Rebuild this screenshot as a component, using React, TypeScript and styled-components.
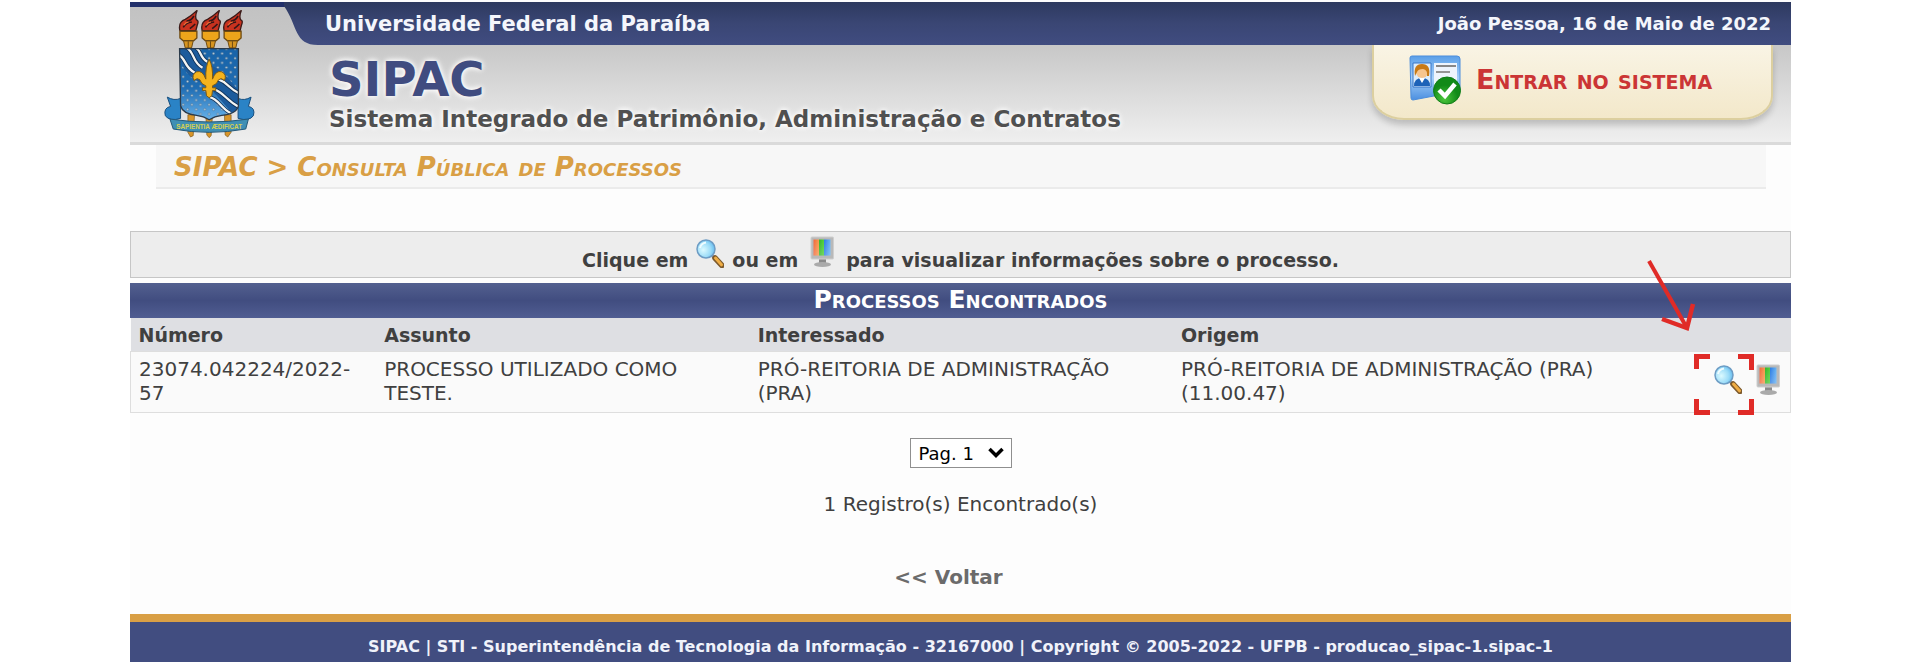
import React from "react";
import styled, { createGlobalStyle } from "styled-components";

const GlobalStyle = createGlobalStyle`
  * { box-sizing: border-box; }
  body {
    margin: 0;
    background: #fff;
    color: #404040;
    font-family: "DejaVu Sans", Verdana, sans-serif;
    font-size: 20px;
    line-height: 24px;
  }
`;

const Page = styled.div`
  margin: 0 129px 0 130px;
  padding-top: 2px;
  background: #fdfdfd;
`;

const Header = styled.header`
  display: flex;
  border-top: 5px solid #22306a;
  border-bottom: 3px solid #dadada;
  background: linear-gradient(#c2c2c2 0, #c8c8c8 40px, #efefef 100%);
`;

const CrestBox = styled.div`
  flex: none;
  width: 154px;
  padding: 3px 0 4px 34px;

  svg { display: block; }
`;

const HeaderBody = styled.div`
  flex: 1;
  min-width: 0;
`;

const TopBar = styled.div`
  display: flex;
  align-items: center;
  justify-content: space-between;
  height: 43px;
  margin-top: -5px;
  padding: 0 20px 0 41px;
  background: linear-gradient(#2d395f, #3a4674 50%, #404c80);
  clip-path: path("M0 0 H9000 V43 H34 C10 43 14 24 0 4 Z");
  color: #f4f6fc;
  font-weight: bold;
`;

const University = styled.span`
  font-size: 21px;
`;

const Today = styled.span`
  font-size: 18px;
`;

const HeaderMain = styled.div`
  display: flex;
  justify-content: space-between;
  align-items: flex-start;
  padding-right: 18px;
`;

const Brand = styled.div`
  padding: 7px 0 8px 45px;
  font-weight: bold;
  text-shadow: 0 0 5px #fff, 0 0 7px #fff;
`;

const BrandName = styled.h1`
  margin: 0;
  color: #404c80;
  font-size: 48px;
  line-height: 54px;
`;

const BrandText = styled.p`
  margin: 0;
  color: #505050;
  font-size: 23px;
  line-height: 26px;
`;

const Login = styled.a`
  display: flex;
  align-items: center;
  gap: 15px;
  width: 401px;
  height: 75px;
  padding: 0 0 4px 34px;
  border: 2px solid #dccf9f;
  border-top: 0;
  border-radius: 0 0 32px 32px / 0 0 24px 24px;
  background: linear-gradient(#f9f4e5, #f3e8ca);
  box-shadow: 0 5px 6px rgba(0, 0, 0, 0.18);
  color: #cb3535;
  font-size: 27px;
  font-variant: small-caps;
  font-weight: bold;
  text-decoration: none;
  white-space: nowrap;
`;

const Breadcrumb = styled.h2`
  margin: 0 25px 42px 26px;
  padding: 10px 18px 8px;
  border-bottom: 2px solid #ebebeb;
  background: #f7f7f7;
  color: #d99f45;
  font-size: 26px;
  font-style: italic;
  font-variant: small-caps;
  font-weight: bold;
  line-height: 24px;
`;

const Legend = styled.div`
  display: flex;
  align-items: flex-end;
  justify-content: center;
  gap: 8px;
  height: 47px;
  margin-bottom: 5px;
  padding-bottom: 5px;
  border: 1px solid #c6c6c6;
  background: #ededed;
  font-size: 19px;
  font-weight: bold;

  svg { margin-bottom: 4px; }
  svg + span + svg { margin: 0 4px 4px; }
`;

const Results = styled.table`
  width: 100%;
  table-layout: fixed;
  border-collapse: collapse;
`;

const Caption = styled.caption`
  height: 35px;
  background: linear-gradient(#53608f, #414d80 50%, #505d92);
  color: #fff;
  font-size: 25px;
  font-variant: small-caps;
  font-weight: bold;
  line-height: 34px;
`;

const Head = styled.th`
  padding: 5px 8px 4px;
  background: #dedfe3;
  font-size: 19px;
  text-align: left;
`;

const Row = styled.tr`
  border: 1px solid #dedede;
  background: #fafafa;
`;

const Cell = styled.td`
  padding: 5px 8px 7px;
  vertical-align: top;
`;

const ActionCell = styled.td<{ $pad: string }>`
  position: relative;
  padding: ${(p) => p.$pad};
  text-align: center;
  vertical-align: middle;
`;

const IconButton = styled.button`
  display: inline-flex;
  padding: 0;
  border: 0;
  background: none;
  cursor: pointer;
`;

const Highlight = styled.svg`
  position: absolute;
  top: -95px;
  left: -52px;
  pointer-events: none;
`;

const Col = styled.col<{ $width?: string }>`
  width: ${(p) => p.$width ?? "auto"};
`;

const Pager = styled.div`
  display: flex;
  flex-direction: column;
  align-items: center;
  padding: 25px 0 25px;
`;

const SelectWrap = styled.label`
  display: grid;
  align-items: center;
  margin-bottom: 24px;

  > * { grid-area: 1 / 1; }
  svg { justify-self: end; margin-right: 8px; pointer-events: none; }
`;

const PageSelect = styled.select`
  width: 102px;
  height: 30px;
  padding: 0 8px;
  border: 1px solid #8f8f8f;
  border-radius: 0;
  appearance: none;
  background: #fff;
  color: #000;
  font: 18px "DejaVu Sans", Verdana, sans-serif;
`;

const Total = styled.p`
  margin: 0 0 49px;
`;

const Back = styled.a`
  padding-right: 24px;
  color: #6b6b6b;
  font-weight: bold;
  text-decoration: none;
`;

const Footer = styled.footer`
  padding: 13px 0 4px;
  border-top: 8px solid #d99f45;
  background: #414d80;
  color: #f0f2fa;
  font-size: 16px;
  font-weight: bold;
  text-align: center;
`;

const Magnifier = () => (
  <svg width="28" height="29" viewBox="0 0 28 29" aria-hidden="true">
    <defs>
      <radialGradient id="lens" cx="0.35" cy="0.55" r="0.7">
        <stop offset="0" stopColor="#dcfaff" />
        <stop offset="0.6" stopColor="#9bdcf8" />
        <stop offset="1" stopColor="#5cb4ec" />
      </radialGradient>
    </defs>
    <path d="M15.500 16 L19 19.500" stroke="#8c8c98" strokeWidth="3" />
    <path d="M19 19 L26 26.500" stroke="#7d5a2c" strokeWidth="5.500" strokeLinecap="round" />
    <path d="M19.500 19 L25.500 25.800" stroke="#f0ae45" strokeWidth="3" strokeLinecap="round" />
    <circle cx="10" cy="10" r="9" fill="url(#lens)" stroke="#6d9cc4" strokeWidth="1.500" />
    <path d="M4 9 A7 7 0 0 1 10 3.500" stroke="#effcff" strokeWidth="2" fill="none" />
  </svg>
);

const Monitor = () => (
  <svg width="24" height="32" viewBox="0 0 24 32" aria-hidden="true">
    <defs>
      <linearGradient id="screen">
        <stop offset="0" stopColor="#f4663b" />
        <stop offset="0.300" stopColor="#f49a4c" />
        <stop offset="0.340" stopColor="#35b52b" />
        <stop offset="0.600" stopColor="#4fd038" />
        <stop offset="0.640" stopColor="#2f7fe4" />
        <stop offset="1" stopColor="#69b5f4" />
      </linearGradient>
      <linearGradient id="shine" x2="0" y2="1">
        <stop offset="0" stopColor="#fff" stopOpacity="0" />
        <stop offset="1" stopColor="#fff" stopOpacity="0.200" />
      </linearGradient>
    </defs>
    <path d="M9 22 H16 V27 H9Z" fill="#8a8a8a" />
    <ellipse cx="12.500" cy="28.500" rx="8.500" ry="2.500" fill="#aaa" />
    <rect x="1" y="1" width="22.500" height="22" rx="1" fill="#b9b9b9" stroke="#cfcfcf" />
    <rect x="3.500" y="3.500" width="17" height="16" fill="url(#screen)" />
    <rect x="3.500" y="3.500" width="17" height="16" fill="url(#shine)" />
  </svg>
);

const IdCard = () => (
  <svg width="53" height="50" viewBox="0 0 53 50" aria-hidden="true">
    <defs>
      <linearGradient id="card" x2="0" y2="1">
        <stop offset="0" stopColor="#5b9fe8" />
        <stop offset="0.500" stopColor="#a5cff8" />
        <stop offset="1" stopColor="#4b8fe0" />
      </linearGradient>
      <radialGradient id="ok" cx="0.4" cy="0.8">
        <stop offset="0" stopColor="#4cc63c" />
        <stop offset="1" stopColor="#128a18" />
      </radialGradient>
    </defs>
    <path d="M2 3 Q2 1 4 1 H49 Q52 1 52 4 V36 L5 45 Q3 45 3 43Z" fill="url(#card)" stroke="#4c8ddb" />
    <path d="M26 8 H49 V32 H26Z" fill="#eef4fc" />
    <path d="M5 8 H23 V32 H5Z" fill="#dcecfb" stroke="#3977c8" />
    <path d="M6 31 Q6 23 14 23 Q22 23 22 31Z" fill="#1d62b8" />
    <path d="M11 23 H17 L14 28Z" fill="#fff" />
    <circle cx="14" cy="17" r="6" fill="#f7c58e" />
    <path d="M7 21 Q5 9 14 9 Q23 9 21 21 L19 21 Q20 15 15 14 Q10 14 9 17Z" fill="#c87a16" />
    <path d="M28 11 H48" stroke="#878787" strokeWidth="2" />
    <path d="M28 17 H42" stroke="#959595" strokeWidth="2" />
    <circle cx="39" cy="35.500" r="13.500" fill="url(#ok)" stroke="#0f7d16" />
    <path d="M31 35 L37 41 L47 29" stroke="#fff" strokeWidth="4.500" fill="none" />
  </svg>
);

const torches = [100, 167, 233];

const Crest = () => (
  <svg width="91" height="128" viewBox="27 30 272 385" role="img" aria-label="Brasão da UFPB">
    <defs>
      <linearGradient id="field" x2="0" y2="1">
        <stop offset="0" stopColor="#1763a8" />
        <stop offset="0.550" stopColor="#1f6cb2" />
        <stop offset="1" stopColor="#69b4ec" />
      </linearGradient>
      <pattern id="dots" width="26" height="28" patternUnits="userSpaceOnUse">
        <circle cx="6" cy="7" r="3.500" fill="#b9cfdd" stroke="#1a3c60" />
        <circle cx="19" cy="21" r="3.500" fill="#b9cfdd" stroke="#1a3c60" />
      </pattern>
      <clipPath id="shield">
        <path d="M73 146 H250 V318 Q246 342 200 347 Q178 350 162 360 Q146 350 124 347 Q82 342 76 318Z" />
      </clipPath>
    </defs>
    {torches.map((x) => (
      <g key={x} transform={`translate(${x} 0)`}>
        <path d="M-26 92 Q-32 66 -10 58 Q8 48 26 31 Q18 50 24 60 Q32 62 26 76 L22 92Z" fill="#c8321f" stroke="#3b1a18" strokeWidth="4" />
        <path d="M-16 82 Q-8 68 10 66 M-6 64 Q8 62 16 48 M4 86 Q12 80 20 72" stroke="#341617" strokeWidth="5" fill="none" />
        <path d="M-14 76 Q-10 68 0 66" stroke="#ee6a35" strokeWidth="4" fill="none" />
        <path d="M-26 94 H25 V114 L16 122 H-17 L-26 114Z" fill="#eda51b" stroke="#6f4c13" strokeWidth="4" />
        <path d="M-15 123 H14 L9 144 H-10Z" fill="#d79520" stroke="#6f4c13" strokeWidth="3" />
        <path d="M-1 124 V144" stroke="#6f4c13" strokeWidth="3" />
      </g>
    ))}
    <path d="M98 345 H118 L114 408 L106 412 L98 398Z M152 345 H172 L168 408 L162 414 L155 406Z M208 345 H228 L228 398 L218 412 L210 406Z" fill="#d8952a" stroke="#7c5718" strokeWidth="2" />
    <path d="M76 296 Q56 304 36 292 L46 320 Q24 324 30 348 Q44 366 76 356Z" fill="#2a83c6" stroke="#194e7c" strokeWidth="3" />
    <path d="M249 296 Q268 304 288 292 L280 320 Q302 324 295 348 Q282 366 249 356Z" fill="#2a83c6" stroke="#194e7c" strokeWidth="3" />
    <g clipPath="url(#shield)">
      <path d="M70 140 H254 V364 H70Z" fill="url(#field)" />
      <path d="M70 140 H254 V364 H70Z" fill="url(#dots)" />
      <path d="M66 130 C110 160 100 200 144 218 S200 262 262 330" stroke="#1c5b9c" strokeWidth="60" fill="none" />
      <g stroke="#10335a" strokeWidth="12" fill="none">
        <path d="M66 162 C94 174 84 200 118 218 M164 292 C190 298 196 324 226 340" />
        <path d="M92 142 C120 156 108 184 142 204 M176 268 C206 278 214 302 252 322" />
        <path d="M118 140 C140 152 132 172 156 186 M188 238 C220 248 220 268 256 282" />
      </g>
      <g stroke="#f3f4f3" strokeWidth="7" fill="none">
        <path d="M66 162 C94 174 84 200 118 218 M164 292 C190 298 196 324 226 340" />
        <path d="M92 142 C120 156 108 184 142 204 M176 268 C206 278 214 302 252 322" />
        <path d="M118 140 C140 152 132 172 156 186 M188 238 C220 248 220 268 256 282" />
      </g>
    </g>
    <path d="M73 146 H250 V318 Q246 342 200 347 Q178 350 162 360 Q146 350 124 347 Q82 342 76 318Z" fill="none" stroke="#2b3a4a" strokeWidth="4" />
    <path d="M162 178 Q174 200 172 238 Q182 210 200 216 Q216 224 208 242 Q198 232 190 240 Q186 254 172 258 V264 H182 V272 H172 L170 288 L162 294 L154 288 L152 272 H142 V264 H152 V258 Q138 254 134 240 Q126 232 116 242 Q108 224 124 216 Q142 210 152 238 Q150 200 162 178Z" fill="#f4b31d" stroke="#7d5a14" strokeWidth="3" />
    <path d="M44 358 Q162 376 280 358 L272 388 Q162 408 54 388Z" fill="#3f8fb4" stroke="#245878" strokeWidth="3" />
    <text x="162" y="387" textAnchor="middle" fontFamily="Liberation Sans, sans-serif" fontSize="19" fontWeight="bold" fill="#d6cf52">SAPIENTIA ÆDIFICAT</text>
  </svg>
);

export default function App() {
  return (
    <>
      <GlobalStyle />
      <Page>
        <Header>
          <CrestBox>
            <Crest />
          </CrestBox>
          <HeaderBody>
            <TopBar>
              <University>Universidade Federal da Paraíba</University>
              <Today>João Pessoa, 16 de Maio de 2022</Today>
            </TopBar>
            <HeaderMain>
              <Brand>
                <BrandName>SIPAC</BrandName>
                <BrandText>Sistema Integrado de Patrimônio, Administração e Contratos</BrandText>
              </Brand>
              <Login href="#entrar">
                <IdCard />
                Entrar no sistema
              </Login>
            </HeaderMain>
          </HeaderBody>
        </Header>

        <Breadcrumb>SIPAC &gt; Consulta Pública de Processos</Breadcrumb>

        <Legend>
          <span>Clique em</span>
          <Magnifier />
          <span>ou em</span>
          <Monitor />
          <span>para visualizar informações sobre o processo.</span>
        </Legend>

        <Results>
          <Caption>Processos Encontrados</Caption>
          <colgroup>
            <Col $width="14.8%" />
            <Col $width="22.5%" />
            <Col $width="25.5%" />
            <Col />
            <Col $width="60px" />
            <Col $width="38px" />
          </colgroup>
          <thead>
            <tr>
              <Head scope="col">Número</Head>
              <Head scope="col">Assunto</Head>
              <Head scope="col">Interessado</Head>
              <Head scope="col" colSpan={3}>Origem</Head>
            </tr>
          </thead>
          <tbody>
            <Row>
              <Cell>23074.042224/2022-57</Cell>
              <Cell>PROCESSO UTILIZADO COMO TESTE.</Cell>
              <Cell>PRÓ-REITORIA DE ADMINISTRAÇÃO (PRA)</Cell>
              <Cell>PRÓ-REITORIA DE ADMINISTRAÇÃO (PRA) (11.00.47)</Cell>
              <ActionCell $pad="0 0 0 12px">
                <IconButton type="button" aria-label="Visualizar processo">
                  <Magnifier />
                </IconButton>
                <Highlight width="120" height="164" viewBox="0 0 120 164" aria-hidden="true">
                  <g stroke="#e02b27" fill="none">
                    <path d="M9 4 L47 71" strokeWidth="4" />
                    <path d="M22 62 L47 71 L53 47" strokeWidth="4.500" />
                    <path d="M56.500 112 V99.500 H70 M98 99.500 H111.500 V113 M111.500 142 V155.500 H98 M70 155.500 H56.500 V142" strokeWidth="5" />
                  </g>
                </Highlight>
              </ActionCell>
              <ActionCell $pad="0 6px 0 0">
                <IconButton type="button" aria-label="Visualizar em tela">
                  <Monitor />
                </IconButton>
              </ActionCell>
            </Row>
          </tbody>
        </Results>

        <Pager>
          <SelectWrap>
            <PageSelect aria-label="Página" defaultValue="1">
              <option value="1">Pag. 1</option>
            </PageSelect>
            <svg width="16" height="12" viewBox="0 0 16 12" aria-hidden="true">
              <path d="M1.500 2 L8 8.500 L14.500 2" stroke="#000" strokeWidth="3.500" fill="none" />
            </svg>
          </SelectWrap>
          <Total>1 Registro(s) Encontrado(s)</Total>
          <Back href="#voltar">&lt;&lt; Voltar</Back>
        </Pager>

        <Footer>
          SIPAC | STI - Superintendência de Tecnologia da Informação - 32167000 | Copyright © 2005-2022 - UFPB -
          producao_sipac-1.sipac-1
        </Footer>
      </Page>
    </>
  );
}
